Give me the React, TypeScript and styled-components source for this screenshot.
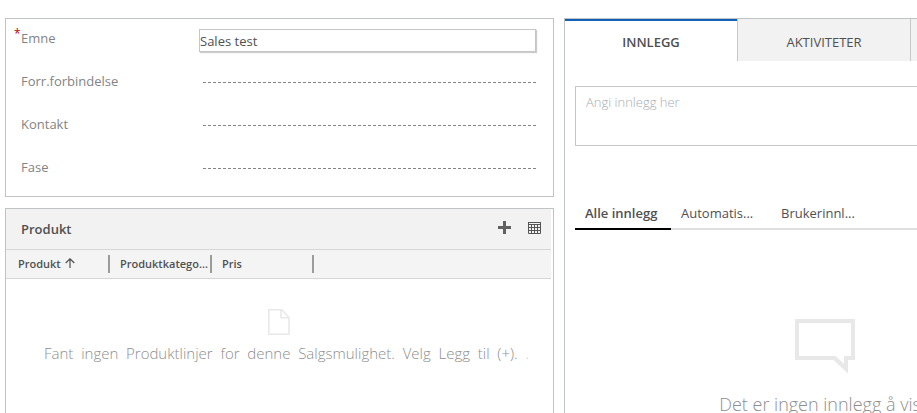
import React from "react";
import styled, { createGlobalStyle } from "styled-components";

const GlobalStyle = createGlobalStyle`
  *, *::before, *::after { box-sizing: border-box; }
  body {
    margin: 0;
    background: #fff;
    color: #505050;
    font-family: "Open Sans", "Noto Sans", sans-serif;
    font-size: 13px;
    overflow: hidden;
  }
  button, input, textarea { font: inherit; color: inherit; border-radius: 0; }
`;

const Page = styled.main`
  display: flex;
  gap: 10px;
  min-height: 100vh;
  padding: 18px 0 0 5px;
`;

const MainColumn = styled.div`
  flex: 1;
  min-width: 0;
  display: flex;
  flex-direction: column;
  gap: 11px;
`;

const FormPanel = styled.form`
  display: grid;
  gap: 20px;
  padding: 10px 17px 15px 15px;
  border: 1px solid #bfc3c5;
`;

const FieldRow = styled.div`
  display: grid;
  grid-template-columns: 178px 1fr;
  height: 23px;
`;

const FieldLabel = styled.label`
  position: relative;
  justify-self: start;
  line-height: 19px;
  color: #838383;
`;

const Required = styled.span`
  position: absolute;
  left: -7px;
  top: -3px;
  font-size: 12px;
  line-height: 16px;
  color: #c00000;
`;

const SubjectInput = styled.input`
  width: 100%;
  height: 23px;
  padding: 0;
  border: 1px solid #c6c6c6;
  outline: none;
  background: #fff;
  box-shadow: 1px 1px 1px #ccc;
`;

const EmptyInput = styled.input`
  height: 11px;
  margin: 0 0 0 4px;
  padding: 0;
  border: 0;
  border-bottom: 1px dashed #858585;
  outline: none;
  background: transparent;
`;

const GridPanel = styled.section`
  flex: 1;
  padding-right: 2px;
  border: 1px solid #bfc3c5;
  border-bottom: 0;
`;

const GridHeader = styled.header`
  display: flex;
  align-items: center;
  height: 41px;
  padding: 0 10px 0 15px;
  background: #f2f2f2;
  border-bottom: 1px solid #d6d6d6;
`;

const GridTitle = styled.h2`
  flex: 1;
  margin: 0;
  font-size: 13px;
  font-weight: 600;
`;

const GridActions = styled.div`
  display: flex;
  gap: 17px;
  padding-bottom: 4px;
`;

const IconButton = styled.button`
  display: flex;
  padding: 0;
  border: 0;
  background: none;
`;

const ProductTable = styled.table`
  width: 100%;
  table-layout: fixed;
  border-collapse: separate;
  border-spacing: 0;
  background: #f4f4f4;
  border-bottom: 1px solid #d6d6d6;
`;

const HeadCell = styled.th<{ $first?: boolean }>`
  width: ${(p) => (p.$first ? 104 : 102)}px;
  height: 28px;
  padding: 0;
  text-align: left;
`;

const HeadLabel = styled.span<{ $first?: boolean }>`
  display: flex;
  align-items: center;
  gap: 4px;
  height: 18px;
  padding: 0 0 2px ${(p) => (p.$first ? 12 : 10)}px;
  border-right: 2px solid #9c9c9c;
  font-size: 11px;
  font-weight: 600;
  white-space: nowrap;
`;

const FillerCell = styled.td`
  padding: 0;
`;

const EmptyGrid = styled.div`
  display: flex;
  flex-direction: column;
  align-items: center;
  gap: 8px;
  padding-top: 30px;
`;

const EmptyGridText = styled.p`
  align-self: stretch;
  margin: 0 22px 0 38px;
  font-size: 15px;
  font-weight: 300;
  line-height: 20px;
  text-align: justify;
  text-align-last: justify;
  white-space: nowrap;
  color: #8e8e8e;
`;

const Faint = styled.span`
  color: #c8c8c8;
`;

const SocialPanel = styled.aside`
  flex: 0 0 353px;
  border: 1px solid #bfc3c5;
  border-width: 1px 0 0 1px;
  overflow: hidden;
`;

const SocialContent = styled.div`
  width: 520px;
`;

const TabBar = styled.div`
  display: grid;
  grid-template-columns: 172px 173px 1fr;
  height: 42px;
`;

const Tab = styled.button<{ $active?: boolean }>`
  padding: 3px 0 0;
  border: 0 solid #c8c8c8;
  border-left-width: ${(p) => (p.$active ? 0 : 1)}px;
  background: ${(p) => (p.$active ? "#fff" : "#f2f2f2")};
  box-shadow: ${(p) => (p.$active ? "inset 0 2px #1160b7" : "none")};
  font-weight: ${(p) => (p.$active ? 600 : 400)};
`;

const TabFiller = styled.div`
  border-left: 1px solid #c8c8c8;
  background: #f2f2f2;
`;

const Feed = styled.div`
  display: flex;
  flex-direction: column;
  padding: 25px 10px 0;
`;

const PostBox = styled.textarea`
  height: 60px;
  padding: 5px 10px;
  border: 1px solid #c6c6c6;
  outline: none;
  resize: none;
  font-weight: 300;
  line-height: 20px;
  &::placeholder { color: #a8adb3; opacity: 1; }
`;

const FilterBar = styled.div`
  display: flex;
  height: 33px;
  margin-top: 51px;
  box-shadow: inset 0 -2px #dfdfdf;
`;

const Filter = styled.button<{ $active?: boolean }>`
  width: ${(p) => (p.$active ? 96 : 100)}px;
  padding: 0 0 0 10px;
  border: 0;
  border-bottom: 2px solid ${(p) => (p.$active ? "#000" : "transparent")};
  background: none;
  font-weight: ${(p) => (p.$active ? 600 : 400)};
  text-align: left;
  white-space: nowrap;
`;

const EmptyFeed = styled.div`
  display: flex;
  flex-direction: column;
  align-items: center;
  gap: 18px;
  padding-top: 89px;
`;

const EmptyFeedText = styled.p`
  margin: 0;
  font-size: 18px;
  font-weight: 300;
  line-height: 24px;
  color: #8e8e8e;
`;

const PlusIcon = () => (
  <svg width="13" height="13" viewBox="0 0 13 13" fill="#606060">
    <path d="M5 0h3v5h5v3H8v5H5V8H0V5h5z" />
  </svg>
);

const TableIcon = () => (
  <svg width="13" height="13" viewBox="0 0 13 13" fill="none" stroke="#555">
    <path d="M.5 1v11.5h12V1M0 1.5h13M0 3.5h13M0 6.5h13M0 9.5h13M3.5 3v9M6.5 3v9M9.5 3v9" />
  </svg>
);

const ArrowUpIcon = () => (
  <svg width="10" height="10" viewBox="0 0 10 10" fill="none" stroke="#505050" strokeWidth="1.2">
    <path d="M5 10V1M.7 5L5 .8 9.3 5" />
  </svg>
);

const DocumentIcon = () => (
  <svg width="22" height="26" viewBox="0 0 22 26" fill="none" stroke="#e8e8e8" strokeWidth="1.5">
    <path d="M.8.8h13L21 8.500v16.700H.8zM13 .8v8h8" />
  </svg>
);

const SpeechIcon = () => (
  <svg width="60" height="55" viewBox="0 0 60 55" fill="#e8e8e8" fillRule="evenodd">
    <path d="M0 0h60v41h-7v13.500L38.500 41H0zM4 4v33h36.500l8.500 8V37h7V4z" />
  </svg>
);

const emptyFields = [
  { id: "lead", label: "Forr.forbindelse" },
  { id: "contact", label: "Kontakt" },
  { id: "phase", label: "Fase" },
];

export default function App() {
  return (
    <>
      <GlobalStyle />
      <Page>
        <MainColumn>
          <FormPanel>
            <FieldRow>
              <FieldLabel htmlFor="subject">
                <Required>*</Required>
                Emne
              </FieldLabel>
              <SubjectInput id="subject" defaultValue="Sales test" />
            </FieldRow>
            {emptyFields.map((field) => (
              <FieldRow key={field.id}>
                <FieldLabel htmlFor={field.id}>{field.label}</FieldLabel>
                <EmptyInput id={field.id} />
              </FieldRow>
            ))}
          </FormPanel>
          <GridPanel>
            <GridHeader>
              <GridTitle>Produkt</GridTitle>
              <GridActions>
                <IconButton type="button" aria-label="Legg til"><PlusIcon /></IconButton>
                <IconButton type="button" aria-label="Tabell"><TableIcon /></IconButton>
              </GridActions>
            </GridHeader>
            <ProductTable>
              <thead>
                <tr>
                  <HeadCell $first><HeadLabel $first>Produkt <ArrowUpIcon /></HeadLabel></HeadCell>
                  <HeadCell><HeadLabel>Produktkatego...</HeadLabel></HeadCell>
                  <HeadCell><HeadLabel>Pris</HeadLabel></HeadCell>
                  <FillerCell />
                </tr>
              </thead>
            </ProductTable>
            <EmptyGrid>
              <DocumentIcon />
              <EmptyGridText>
                Fant ingen Produktlinjer for denne Salgsmulighet. Velg Legg til (+). <Faint>.</Faint>
              </EmptyGridText>
            </EmptyGrid>
          </GridPanel>
        </MainColumn>
        <SocialPanel>
          <SocialContent>
            <TabBar>
              <Tab $active type="button">INNLEGG</Tab>
              <Tab type="button">AKTIVITETER</Tab>
              <TabFiller />
            </TabBar>
            <Feed>
              <PostBox aria-label="Angi innlegg her" placeholder="Angi innlegg her" />
              <FilterBar>
                <Filter $active type="button">Alle innlegg</Filter>
                <Filter type="button">Automatis...</Filter>
                <Filter type="button">Brukerinnl...</Filter>
              </FilterBar>
              <EmptyFeed>
                <SpeechIcon />
                <EmptyFeedText>Det er ingen innlegg å vise</EmptyFeedText>
              </EmptyFeed>
            </Feed>
          </SocialContent>
        </SocialPanel>
      </Page>
    </>
  );
}
